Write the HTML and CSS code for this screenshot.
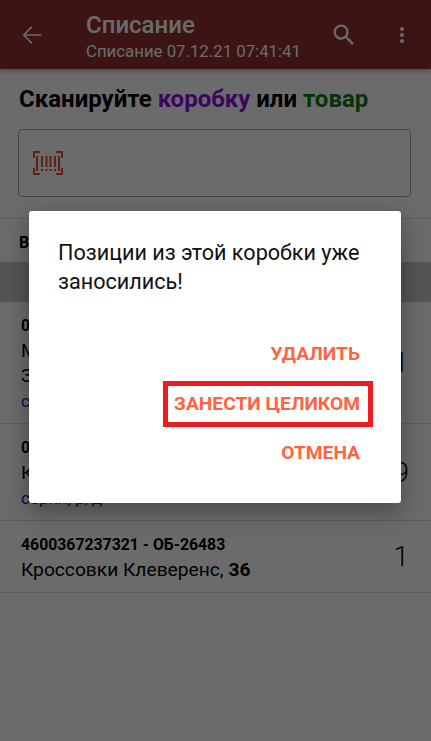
FILE: index.html
```html
<!DOCTYPE html>
<html lang="ru">
<head>
  <meta charset="UTF-8">
  <meta name="viewport" content="width=device-width, initial-scale=1.0">
  <title>Списание</title>
  <link rel="stylesheet" href="styles.css">
</head>
<body>
  <div class="screen">
    <header class="toolbar">
      <svg class="back" width="28" height="28" viewBox="0 0 24 24"><path d="M20 11.300H6.500l5.800-5.800-1-1L4 12l7.300 7.500 1-1-5.800-5.800H20z"/></svg>
      <div class="titles">
        <div class="title">Списание</div>
        <div class="subtitle">Списание 07.12.21 07:41:41</div>
      </div>
      <svg class="search" width="28" height="28" viewBox="0 0 24 24"><path d="M15.5 14h-.79l-.28-.27A6.47 6.47 0 0 0 16 9.500 6.500 6.500 0 1 0 9.500 16c1.610 0 3.090-.59 4.230-1.570l.27.28v.79l5 4.990L20.490 19l-4.990-5zm-6 0C7.010 14 5 11.990 5 9.500S7.010 5 9.500 5 14 7.010 14 9.500 11.990 14 9.500 14z"/></svg>
      <svg class="more" width="24" height="24" viewBox="0 0 24 24"><path d="M12 8c1.100 0 2-.9 2-2s-.9-2-2-2-2 .9-2 2 .9 2 2 2zm0 2c-1.100 0-2 .9-2 2s.9 2 2 2 2-.9 2-2-.9-2-2-2zm0 6c-1.100 0-2 .9-2 2s.9 2 2 2 2-.9 2-2-.9-2-2-2z"/></svg>
    </header>

    <main class="content">
      <h1 class="prompt">Сканируйте <span class="box-word">коробку</span> или <span class="item-word">товар</span></h1>
      <div class="scan-field">
        <svg class="barcode" width="30" height="24" viewBox="0 0 30 24" fill="none">
          <path class="corners" d="M1 7V1h6M23 1h6v6M1 17v6h6M23 23h6v-6"/>
          <path class="bars" d="M4 5v15M9 5v11M13.500 5v11M17.500 5v11M22 5v11M26 5v15M9 18v2M13.500 18v2M17.500 18v2M22 18v2"/>
        </svg>
      </div>

      <div class="section-label">Все</div>
      <div class="band"></div>

      <div class="row row-tall">
        <div class="row-text">
          <div class="code">0000000000000 - ОБ-00000</div>
          <div class="name">Мужская куртка,</div>
          <div class="name">Зимняя</div>
          <div class="link">сборка</div>
        </div>
        <div class="qty">1</div>
      </div>
      <div class="row row-mid">
        <div class="row-text">
          <div class="code">0000000000000 - ОБ-00000</div>
          <div class="name">Кроссовки Клеверенс</div>
          <div class="link">серия, р/д</div>
        </div>
        <div class="qty">9</div>
      </div>
      <div class="row row-short">
        <div class="row-text">
          <div class="code">4600367237321 - ОБ-26483</div>
          <div class="name">Кроссовки Клеверенс, <b>36</b></div>
        </div>
        <div class="qty">1</div>
      </div>
    </main>

    <div class="scrim"></div>

    <div class="dialog">
      <p class="message">Позиции из этой коробки уже заносились!</p>
      <div class="actions">
        <div class="action">УДАЛИТЬ</div>
        <div class="action action-marked">ЗАНЕСТИ ЦЕЛИКОМ</div>
        <div class="action">ОТМЕНА</div>
      </div>
    </div>
  </div>
</body>
</html>
```

FILE: styles.css
```css
* {
  box-sizing: border-box;
}

body {
  margin: 0;
  font-family: Roboto, sans-serif;
  background-color: #fff;
}

.screen {
  position: relative;
  width: 431px;
  height: 741px;
  overflow: hidden;
  background-color: #fff;
}

.toolbar {
  height: 69px;
  display: flex;
  align-items: center;
  background-color: #8f3030;
  color: #fff;
  box-shadow: 0 2px 4px rgba(0, 0, 0, 0.3);
}

.toolbar svg {
  fill: #fff;
  flex: none;
}

.back {
  margin-left: 18px;
}

.titles {
  margin-left: 40px;
  flex: 1;
}

.title {
  padding-top: 3px;
  font-size: 24px;
  font-weight: 500;
  line-height: 28px;
}

.subtitle {
  padding-top: 1px;
  font-size: 16.8px;
  line-height: 22px;
}

.search {
  margin-right: 32px;
}

.more {
  margin-right: 17px;
}

.content {
  display: flex;
  flex-direction: column;
}

.prompt {
  margin: 16px 0 0 19px;
  font-size: 24px;
  line-height: 28px;
  font-weight: 700;
  color: #000;
}

.box-word {
  color: #8b10e0;
}

.item-word {
  color: #0f7a14;
}

.scan-field {
  margin: 16px 20px 0 18px;
  height: 68px;
  padding: 21px 14px;
  border: 1px solid #a8a8a8;
  border-radius: 4px;
}

.barcode {
  display: block;
}

.corners,
.bars {
  stroke: #e8502e;
  stroke-width: 2;
}

.section-label {
  margin-top: 21px;
  height: 44px;
  padding: 14px 0 0 19px;
  border-top: 1px solid #ddd;
  font-size: 16px;
  font-weight: 700;
}

.band {
  height: 40px;
  background-color: #c8c8c8;
}

.row {
  display: flex;
  justify-content: space-between;
  align-items: center;
  padding: 0 22px 0 21px;
  border-bottom: 1px solid #ddd;
}

.row-text {
  padding-top: 4px;
}

.row-tall {
  height: 122px;
  padding-right: 23px;
}

.row-mid {
  height: 97px;
}

.row-short {
  height: 72px;
}

.row-short .row-text {
  padding-top: 2px;
}

.code {
  font-size: 15.8px;
  line-height: 24px;
  font-weight: 700;
}

.name {
  font-size: 19.2px;
  line-height: 25px;
}

.link {
  font-size: 17px;
  line-height: 27px;
  color: #1a1ad0;
}

.qty {
  font-size: 28px;
  font-weight: 300;
}

.row-tall .qty {
  font-weight: 500;
}

.scrim {
  position: absolute;
  inset: 0;
  background-color: rgba(0, 0, 0, 0.58);
}

.dialog {
  position: absolute;
  left: 29px;
  top: 211px;
  width: 372px;
  height: 292px;
  padding: 27px 28px 0 29px;
  background-color: #fff;
  border-radius: 3px;
  box-shadow: 0 8px 24px rgba(0, 0, 0, 0.35);
}

.message {
  margin: 0;
  font-size: 21.6px;
  line-height: 29px;
  color: #111;
}

.actions {
  margin-top: 34px;
  display: flex;
  flex-direction: column;
  align-items: flex-end;
}

.action {
  height: 46px;
  padding: 0 13px;
  display: flex;
  align-items: center;
  font-size: 19.2px;
  font-weight: 700;
  color: #ff6340;
}

.action-marked {
  margin: 5px 0 2px;
  padding: 0 8px 2px 6px;
  border: 5px solid #ed1c24;
}
```
